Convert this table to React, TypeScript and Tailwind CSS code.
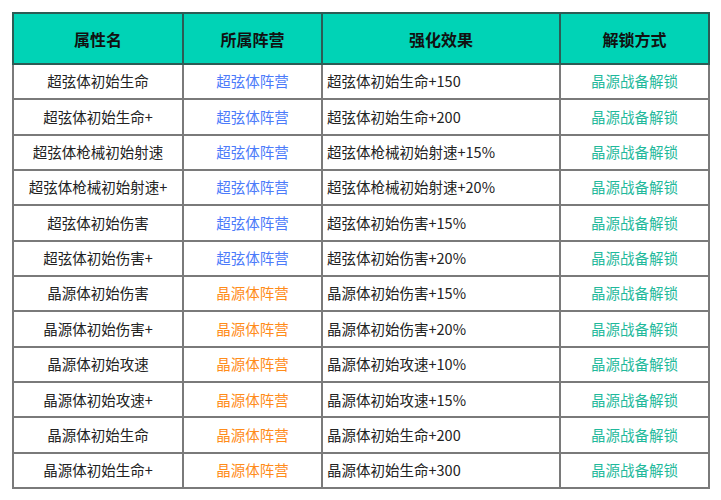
import React from "react";

type Row = { name: string; camp: string; effect: string; blue: boolean };

const rows: Row[] = [
  { name: "超弦体初始生命", camp: "超弦体阵营", effect: "超弦体初始生命+150", blue: true },
  { name: "超弦体初始生命+", camp: "超弦体阵营", effect: "超弦体初始生命+200", blue: true },
  { name: "超弦体枪械初始射速", camp: "超弦体阵营", effect: "超弦体枪械初始射速+15%", blue: true },
  { name: "超弦体枪械初始射速+", camp: "超弦体阵营", effect: "超弦体枪械初始射速+20%", blue: true },
  { name: "超弦体初始伤害", camp: "超弦体阵营", effect: "超弦体初始伤害+15%", blue: true },
  { name: "超弦体初始伤害+", camp: "超弦体阵营", effect: "超弦体初始伤害+20%", blue: true },
  { name: "晶源体初始伤害", camp: "晶源体阵营", effect: "晶源体初始伤害+15%", blue: false },
  { name: "晶源体初始伤害+", camp: "晶源体阵营", effect: "晶源体初始伤害+20%", blue: false },
  { name: "晶源体初始攻速", camp: "晶源体阵营", effect: "晶源体初始攻速+10%", blue: false },
  { name: "晶源体初始攻速+", camp: "晶源体阵营", effect: "晶源体初始攻速+15%", blue: false },
  { name: "晶源体初始生命", camp: "晶源体阵营", effect: "晶源体初始生命+200", blue: false },
  { name: "晶源体初始生命+", camp: "晶源体阵营", effect: "晶源体初始生命+300", blue: false },
];

export default function App() {
  return (
    <div
      className="w-[721px] h-[500px] bg-white pt-[12px] pl-[12px]"
      style={{ fontFamily: '"Noto Sans CJK SC", "Noto Sans", sans-serif' }}
    >
      <table className="table-fixed border-collapse w-[696px] border-2 border-[#6a6a6a]">
        <colgroup>
          <col className="w-[170px]" />
          <col className="w-[139px]" />
          <col className="w-[238px]" />
          <col className="w-[149px]" />
        </colgroup>
        <thead>
          <tr className="h-[51px] bg-[#00d3b6]">
            <th className="border-2 border-[#2c5c55] text-[16px] font-bold text-[#111] text-center">属性名</th>
            <th className="border-2 border-[#2c5c55] text-[16px] font-bold text-[#111] text-center">所属阵营</th>
            <th className="border-2 border-[#2c5c55] text-[16px] font-bold text-[#111] text-center">强化效果</th>
            <th className="border-2 border-[#2c5c55] text-[16px] font-bold text-[#111] text-center">解锁方式</th>
          </tr>
        </thead>
        <tbody>
          {rows.map((r, i) => (
            <tr key={i} className="h-[35.35px]">
              <td className="border-2 border-[#7a7a7a] text-center text-[14.5px] text-[#222] p-0 leading-none">{r.name}</td>
              <td
                className={
                  "border-2 border-[#7a7a7a] text-center text-[14.5px] p-0 leading-none " +
                  (r.blue ? "text-[#4c7bfa]" : "text-[#ff8c1a]")
                }
              >
                {r.camp}
              </td>
              <td className="border-2 border-[#7a7a7a] text-left pl-[4px] text-[14.5px] text-[#222] p-0 leading-none">{r.effect}</td>
              <td className="border-2 border-[#7a7a7a] text-center text-[14.5px] text-[#1fb99b] p-0 leading-none">晶源战备解锁</td>
            </tr>
          ))}
        </tbody>
      </table>
    </div>
  );
}
